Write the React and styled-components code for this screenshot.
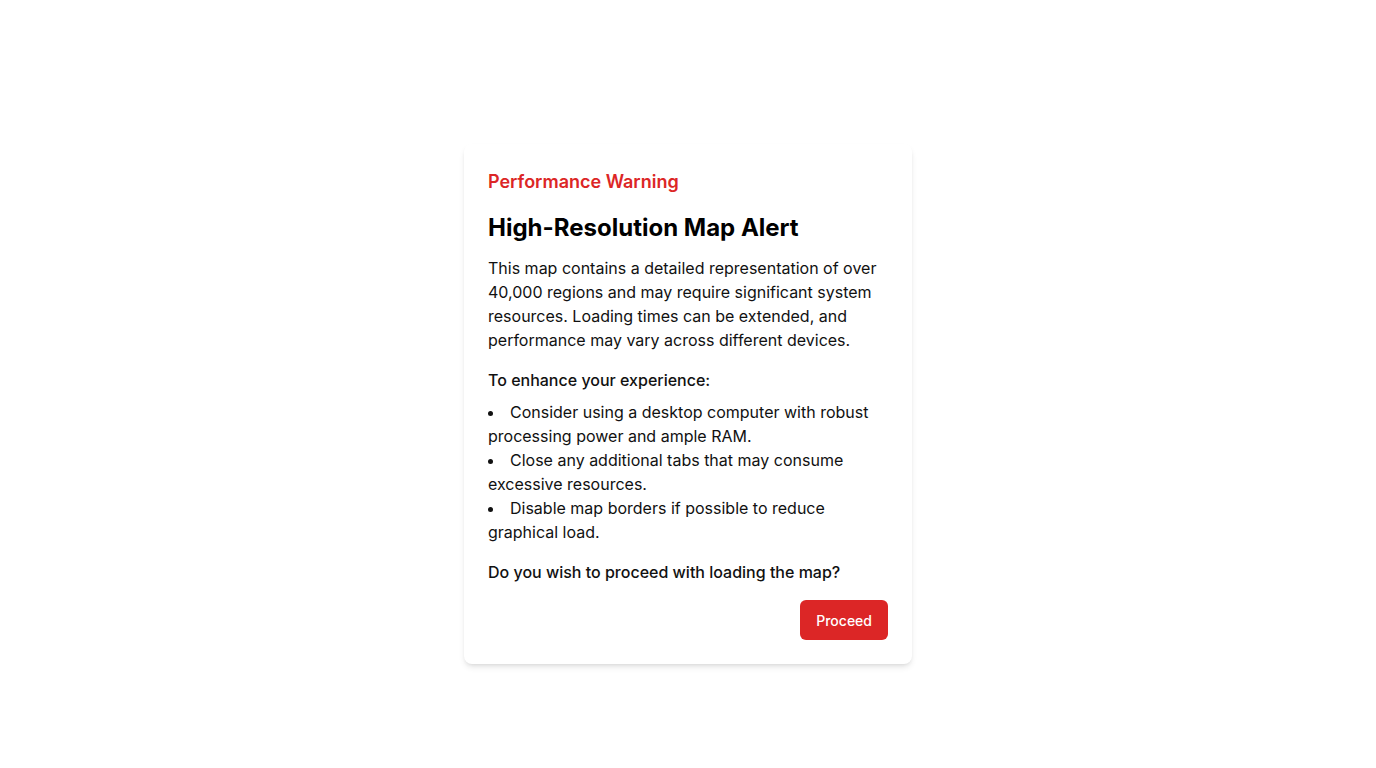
import React from "react";
import styled, { createGlobalStyle } from "styled-components";

const GlobalStyle = createGlobalStyle`
  * {
    box-sizing: border-box;
  }
  body {
    margin: 0;
    background: #ffffff;
    font-family: Inter, "Noto Sans", sans-serif;
    color: #111111;
  }
`;

const Page = styled.div`
  min-height: 768px;
  display: flex;
  justify-content: center;
  align-items: flex-start;
  padding-top: 144px;
`;

const Card = styled.div`
  width: 448px;
  background: #ffffff;
  border-radius: 8px;
  padding: 24px;
  box-shadow: 0 4px 6px -1px rgba(0, 0, 0, 0.1), 0 2px 4px -2px rgba(0, 0, 0, 0.1);
`;

const Eyebrow = styled.div`
  font-size: 18px;
  line-height: 28px;
  font-weight: 600;
  color: #dc2626;
`;

const Title = styled.h2`
  margin: 16px 0 0;
  font-size: 24px;
  line-height: 32px;
  font-weight: 700;
  color: #000000;
`;

const Text = styled.p`
  margin: ${(p) => p.$top || 0}px 0 0;
  font-size: 16px;
  line-height: 24px;
  font-weight: ${(p) => (p.$strong ? 500 : 400)};
`;

const List = styled.ul`
  margin: 8px 0 0;
  padding: 0;
  list-style: disc inside;
  font-size: 16px;
  line-height: 24px;
`;

const Actions = styled.div`
  margin-top: 16px;
  display: flex;
  justify-content: flex-end;
`;

const Button = styled.button`
  height: 40px;
  padding: 0 16px;
  border: none;
  border-radius: 6px;
  background: #dc2626;
  color: #ffffff;
  font-family: inherit;
  font-size: 14px;
  font-weight: 500;
  cursor: pointer;
`;

const App = () => {
  return (
    <>
      <GlobalStyle />
      <Page>
        <Card>
          <Eyebrow>Performance Warning</Eyebrow>
          <Title>High-Resolution Map Alert</Title>
          <Text $top={12}>
            This map contains a detailed representation of over 40,000 regions
            and may require significant system resources. Loading times can be
            extended, and performance may vary across different devices.
          </Text>
          <Text $top={16} $strong>
            To enhance your experience:
          </Text>
          <List>
            <li>
              Consider using a desktop computer with robust processing power
              and ample RAM.
            </li>
            <li>Close any additional tabs that may consume excessive resources.</li>
            <li>Disable map borders if possible to reduce graphical load.</li>
          </List>
          <Text $top={16} $strong>
            Do you wish to proceed with loading the map?
          </Text>
          <Actions>
            <Button>Proceed</Button>
          </Actions>
        </Card>
      </Page>
    </>
  );
};

export default App;
